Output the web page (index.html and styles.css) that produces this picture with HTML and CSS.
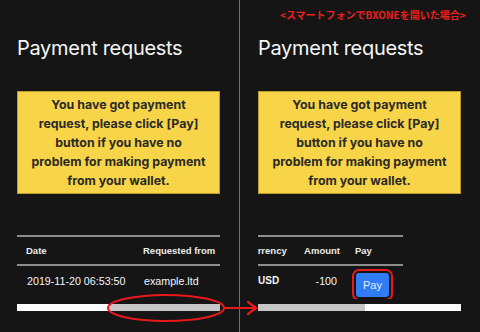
FILE: index.html
```html
<!DOCTYPE html>
<html lang="en">
<head>
<meta charset="utf-8">
<title>Payment requests</title>
<link rel="stylesheet" href="styles.css">
</head>
<body>
<div class="screen">
  <section class="panel panel-left">
    <h1 class="title">Payment requests</h1>
    <div class="notice">You have got payment request, please click [Pay] button if you have no problem for making payment from your wallet.</div>
    <div class="table-clip">
      <table class="req-table left-table">
        <thead>
          <tr><th class="c-date">Date</th><th class="c-from">Requested from</th></tr>
        </thead>
        <tbody>
          <tr><td class="c-date mono">2019-11-20 06:53:50</td><td class="c-from mono">example.ltd</td></tr>
        </tbody>
      </table>
    </div>
    <div class="scrollbar">
      <span class="thumb thumb-left"></span>
      <span class="track"></span>
    </div>
  </section>
  <div class="divider"></div>
  <section class="panel panel-right">
    <h1 class="title">Payment requests</h1>
    <div class="notice">You have got payment request, please click [Pay] button if you have no problem for making payment from your wallet.</div>
    <div class="table-clip">
      <table class="req-table right-table">
        <thead>
          <tr><th class="c-cur">Currency</th><th class="c-amt">Amount</th><th class="c-pay">Pay</th></tr>
        </thead>
        <tbody>
          <tr><td class="c-cur bold">USD</td><td class="c-amt mono">-100</td><td class="c-pay"><button class="pay-btn">Pay</button></td></tr>
        </tbody>
      </table>
    </div>
    <div class="scrollbar">
      <span class="track track-right"></span>
      <span class="thumb"></span>
    </div>
  </section>
  <p class="note">&lt;スマートフォンでBXONEを開いた場合&gt;</p>
  <svg class="annot" width="480" height="332" viewBox="0 0 480 332">
    <ellipse cx="166" cy="308" rx="58" ry="13" fill="none" stroke="#e8191c" stroke-width="2"/>
    <path d="M224 308 H255" stroke="#e8191c" stroke-width="2" fill="none"/>
    <path d="M248 302 L256 308 L248 314" stroke="#e8191c" stroke-width="2.2" fill="none" stroke-linecap="round" stroke-linejoin="round"/>
  </svg>
</div>
</body>
</html>
```

FILE: styles.css
```css
* { box-sizing: border-box; }
html, body { margin: 0; padding: 0; }
body {
  background: #151515;
  width: 480px;
  height: 332px;
  overflow: hidden;
  font-family: Inter, "Noto Sans", sans-serif;
  color: #f2f2f2;
}
.screen {
  position: relative;
  display: flex;
  width: 480px;
  height: 332px;
}
.panel {
  display: flex;
  flex-direction: column;
  padding-top: 35px;
}
.panel-left { width: 239px; padding-left: 17px; }
.panel-right { width: 240px; padding-left: 18px; }
.divider { width: 1px; background: #6f6f6f; }

.title {
  margin: 0;
  font-size: 20px;
  line-height: 26px;
  font-weight: 400;
  color: #f6f6f6;
  letter-spacing: -0.3px;
}
.notice {
  margin-top: 30px;
  width: 203px;
  height: 103px;
  background: #f8d548;
  border: 1px solid #b99a2c;
  padding: 3px 12px;
  text-align: center;
  font-size: 12.4px;
  line-height: 19px;
  font-weight: 700;
  color: #2b2a27;
}
.table-clip {
  margin-top: 41px;
  width: 203px;
  overflow: hidden;
}
.req-table {
  border-collapse: collapse;
  table-layout: fixed;
  font-family: "Liberation Sans", Arial, sans-serif;
  font-size: 9.5px;
}
.req-table th {
  height: 29px;
  padding: 0;
  font-weight: 700;
  color: #ececec;
  border-top: 2px solid #8d8d8d;
  border-bottom: 2px solid #8d8d8d;
  text-align: left;
  vertical-align: middle;
  white-space: nowrap;
}
.req-table td {
  padding: 7px 0 0;
  height: 34px;
  vertical-align: top;
  line-height: 16px;
  color: #f4f6ff;
  white-space: nowrap;
}
.mono { font-size: 10.7px; }
.bold { font-weight: 700; font-size: 10px; }

.left-table { width: 203px; }
.left-table .c-date { width: 117px; padding-left: 9px; }
.left-table .c-from { width: 86px; padding-left: 9px; }
.left-table td.c-date { padding-left: 10px; }
.left-table td.c-from { padding-left: 10px; }

.right-table { margin-left: -25px; width: 170px; }
.right-table .c-cur { width: 70px; text-align: left; padding-left: 12px; }
.right-table td.c-cur { padding-left: 25px; }
.right-table .c-amt { width: 42px; text-align: right; padding-right: 5px; }
.right-table td.c-amt { padding-right: 8px; }
.right-table .c-pay { width: 58px; padding-left: 10px; text-align: left; }
.right-table td.c-pay { padding-left: 11px; }

.pay-btn {
  display: block;
  width: 33px;
  height: 24px;
  border: none;
  border-radius: 3px;
  background: #2f7cf4;
  color: #e4ecff;
  font-family: "Liberation Sans", Arial, sans-serif;
  font-size: 11px;
  padding: 0;
  outline: 2px solid #e8191c;
  outline-offset: 2px;
}

.scrollbar {
  margin-top: 5px;
  display: flex;
  width: 203px;
  height: 7px;
}
.thumb { display: block; background: #ffffff; width: 91px; }
.track { display: block; background: #c6c6c6; flex: 1; }
.thumb-left { width: 91px; }
.track-right { flex: 0 0 107px; }
.scrollbar .thumb:last-child { flex: 1; }

.note {
  position: absolute;
  left: 280px;
  top: 7px;
  margin: 0;
  font-family: "Noto Sans CJK JP", sans-serif;
  font-size: 10px;
  font-weight: 700;
  line-height: 16px;
  color: #ef1f1f;
}
.annot {
  position: absolute;
  left: 0;
  top: 0;
  pointer-events: none;
}
```
